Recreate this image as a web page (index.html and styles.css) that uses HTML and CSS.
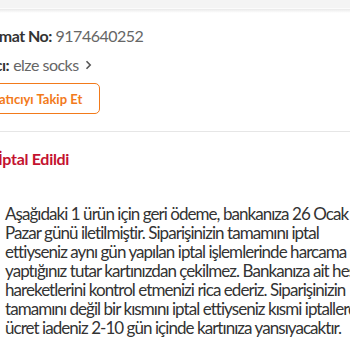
FILE: index.html
```html
<!DOCTYPE html>
<html lang="tr">
<head>
<meta charset="utf-8">
<link rel="stylesheet" href="styles.css">
</head>
<body>
<div class="topband"></div>
<div class="topline"></div>
<div class="topshadow"></div>
<div class="card">
  <div class="info">
    <div class="row row-no"><b>Teslimat No:</b> <span class="muted">9174640252</span></div>
    <div class="row row-seller"><b>Satıcı:</b> <span class="muted">elze socks</span><svg class="chev" width="7" height="10" viewBox="0 0 7 10"><path d="M1.5 1.2 L5.2 5 L1.5 8.8" fill="none" stroke="#555" stroke-width="1.6"/></svg></div>
    <button class="follow">Satıcıyı Takip Et</button>
  </div>
  <div class="sep"></div>
  <div class="status">İptal Edildi</div>
  <p class="desc">Aşağıdaki 1 ürün için geri ödeme, bankanıza 26 Ocak<br>Pazar günü iletilmiştir. Siparişinizin tamamını iptal<br>ettiyseniz aynı gün yapılan iptal işlemlerinde harcama<br>yaptığınız tutar kartınızdan çekilmez. Bankanıza ait hesap<br>hareketlerini kontrol etmenizi rica ederiz. Siparişinizin<br>tamamını değil bir kısmını iptal ettiyseniz kısmi iptallerde<br>ücret iadeniz 2-10 gün içinde kartınıza yansıyacaktır.</p>
</div>
</body>
</html>
```
FILE: styles.css
```css
html, body {
  margin: 0;
  padding: 0;
  background: #fff;
  overflow: hidden;
}
body {
  width: 350px;
  height: 350px;
  font-family: Lato, "Noto Sans", sans-serif;
  color: #333;
}
.topband {
  height: 8px;
  background: #f4f4f4;
}
.topline {
  height: 1px;
  background: #fbfbfb;
}
.topshadow {
  height: 4px;
  background: linear-gradient(#e9e9e9, #fff);
}
.card {
  margin-left: -40px;
  width: 460px;
}
.info {
  padding: 13px 0 0 10px;
  display: flex;
  flex-direction: column;
  align-items: flex-start;
}
.row {
  white-space: nowrap;
  font-size: 16px;
  letter-spacing: -0.5px;
  line-height: 20px;
}
.row b {
  font-weight: 700;
  color: #333;
}
.muted {
  color: #666;
}
.row-seller {
  margin-top: 9px;
  display: flex;
  align-items: center;
  gap: 4px;
}
.chev {
  margin-left: 2px;
}
.follow {
  margin-top: 8px;
  height: 31px;
  padding: 0 17px 0 21px;
  border: 1px solid #f27a1a;
  border-radius: 5px;
  background: #fff;
  color: #f27a1a;
  font-family: Lato, sans-serif;
  font-weight: 700;
  font-size: 13px;
}
.sep {
  height: 1px;
  background: #e6e6e6;
  margin-top: 17px;
}
.status {
  padding: 17px 0 0 38px;
  font-size: 16px;
  letter-spacing: -0.3px;
  font-weight: 700;
  color: #c4122f;
  line-height: 20px;
}
.desc {
  margin: 35px 0 0 45px;
  font-size: 17px;
  line-height: 19px;
  letter-spacing: -0.95px;
  color: #333;
  white-space: nowrap;
}
```
